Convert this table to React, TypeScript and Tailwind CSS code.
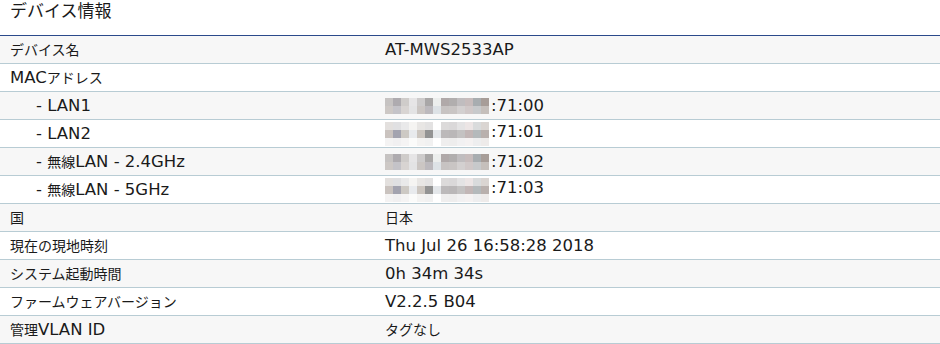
const blurA: string[][] = [
  ["#c6c3c2", "#aeabaf", "#cfccca", "#e6e5e6", "#cdcbcb", "#a9a7a7", "#eceeed", "#b0a9a9", "#b1aeae", "#c0bdbf", "#c7bcbc", "#a8adb0", "#a79d98"],
  ["#cdc8c5", "#c4c3c8", "#d8d4d2", "#e3e3e4", "#cbc6c3", "#bcb9bd", "#dde2e6", "#c7c3c2", "#c9c5c4", "#d3d0d0", "#d0c8c8", "#c7c9cb", "#c5bfbb"],
];

const blurB: string[][] = [
  ["#e3e0de", "#e0e0e2", "#e9e9ea", "#f5f4f2", "#e8e6e4", "#e3e2e2", "#ffffff", "#dcdada", "#dad8d9", "#e4e3e4", "#ece5e5", "#d9dbdc", "#dad5d2"],
  ["#cac3bf", "#a3a3af", "#cdc9c4", "#e8eaed", "#ccc6c0", "#939393", "#e4e7ea", "#bcb9ba", "#bab7b8", "#c4c2c2", "#c2b6b6", "#b4b9bb", "#b9b0ad"],
  ["#f4f3f3", "#f1f0f1", "#f5f4f4", "#fbfbfa", "#f4f3f2", "#f1f1f1", "#ffffff", "#efeeee", "#eeeded", "#f2f1f2", "#f5f2f2", "#eeeeef", "#eeebea"],
];

// Pixelated (mosaic) part of the MAC address
function Mosaic({ rows }: { rows: string[][] }) {
  return (
    <span className="inline-flex flex-col mr-[2px] self-center">
      {rows.map((row, i) => (
        <span key={i} className="flex">
          {row.map((c, j) => (
            <span key={j} className="block w-[8px] h-[8px]" style={{ background: c }} />
          ))}
        </span>
      ))}
    </span>
  );
}

// Japanese glyphs sit smaller than the latin ones in the original page
function Txt({ text }: { text: string }) {
  const parts = text.split(/([\u3000-\u9fff\uff00-\uffef]+)/);
  return (
    <>
      {parts.map((p, i) =>
        i % 2 === 1 ? (
          <span key={i} className="text-[14px]">{p}</span>
        ) : (
          <span key={i}>{p}</span>
        )
      )}
    </>
  );
}

type Row = { label: string; indent?: boolean; value?: React.ReactNode };

const rows: Row[] = [
  { label: "デバイス名", value: "AT-MWS2533AP" },
  { label: "MACアドレス" },
  { label: "- LAN1", indent: true, value: <><Mosaic rows={blurA} />:71:00</> },
  { label: "- LAN2", indent: true, value: <><Mosaic rows={blurB} />:71:01</> },
  { label: "- 無線LAN - 2.4GHz", indent: true, value: <><Mosaic rows={blurA} />:71:02</> },
  { label: "- 無線LAN - 5GHz", indent: true, value: <><Mosaic rows={blurB} />:71:03</> },
  { label: "国", value: "日本" },
  { label: "現在の現地時刻", value: "Thu Jul 26 16:58:28 2018" },
  { label: "システム起動時間", value: "0h 34m 34s" },
  { label: "ファームウェアバージョン", value: "V2.2.5 B04" },
  { label: "管理VLAN ID", value: "タグなし" },
];

export default function App() {
  return (
    <div className="w-[940px] h-[344px] bg-white text-[#1a1a1a] font-['DejaVu_Sans','Noto_Sans_CJK_JP',sans-serif] overflow-hidden">
      <h1 className="h-[35px] pl-[10px] pt-[1px] text-[17px] leading-[20px] font-normal">デバイス情報</h1>
      <div className="border-t border-[#2b4a8b]">
        {rows.map((r, i) => (
          <div
            key={i}
            className={`flex h-[28px] items-center border-b border-[#b8ccd4] text-[16.5px] leading-[20px] ${i % 2 === 0 ? "bg-[#f7f7f7]" : "bg-white"}`}
          >
            <div className={`w-[385px] shrink-0 ${r.indent ? "pl-[36px]" : "pl-[10px]"}`}>
              <Txt text={r.label} />
            </div>
            <div className="flex items-baseline">
              {typeof r.value === "string" ? <Txt text={r.value} /> : r.value}
            </div>
          </div>
        ))}
      </div>
    </div>
  );
}
